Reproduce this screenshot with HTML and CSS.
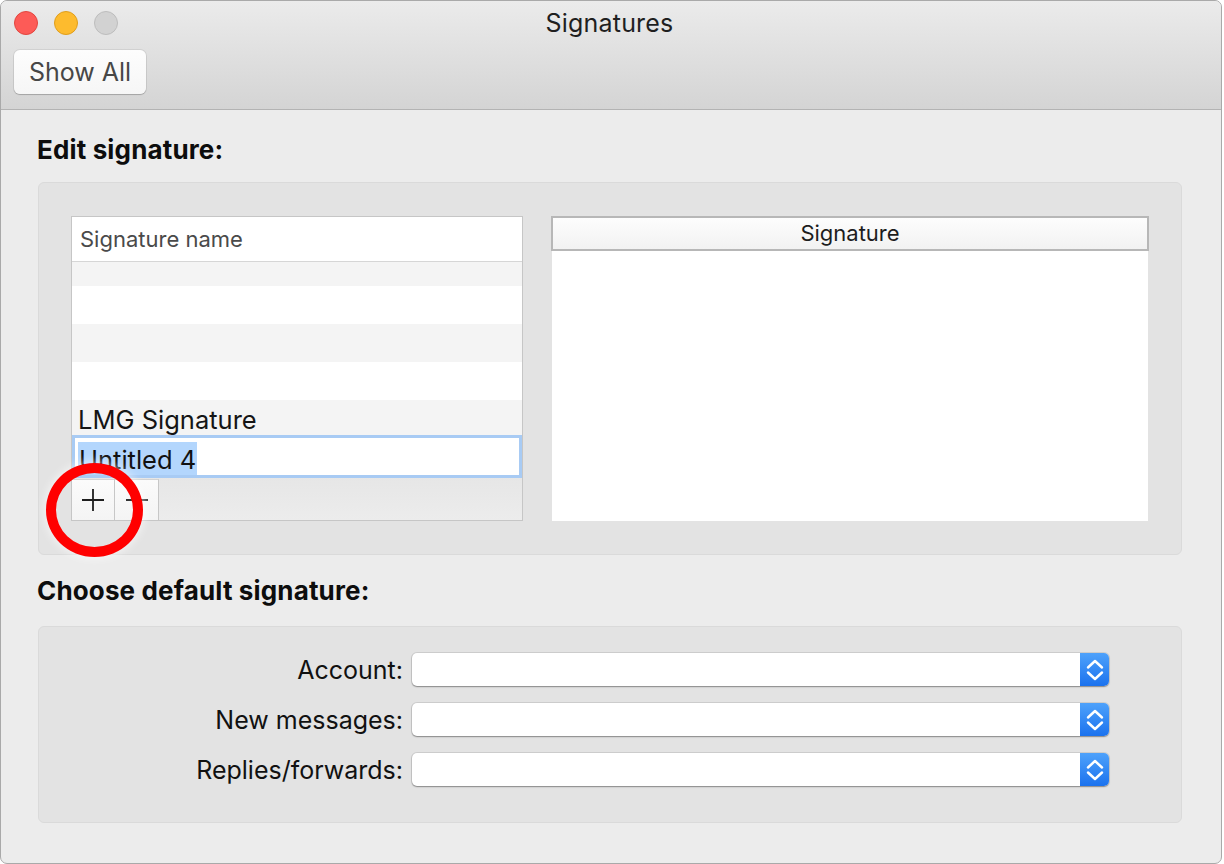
FILE: index.html
```html
<!DOCTYPE html>
<html>
<head>
<meta charset="utf-8">
<title>Signatures</title>
<link rel="stylesheet" href="styles.css">
</head>
<body>
<div class="window">
  <div class="chrome">
    <div class="titlebar">
      <div class="lights">
        <span class="light red"></span>
        <span class="light yellow"></span>
        <span class="light gray"></span>
      </div>
      <div class="title">Signatures</div>
      <div class="spacer"></div>
    </div>
    <div class="toolbar">
      <button class="show-all">Show All</button>
    </div>
  </div>
  <div class="content">
    <h2 class="section-title first">Edit signature:</h2>
    <div class="group edit-group">
      <div class="list">
        <div class="list-header">Signature name</div>
        <div class="list-body">
          <div class="row alt partial"></div>
          <div class="row"></div>
          <div class="row alt"></div>
          <div class="row"></div>
          <div class="row alt"><span class="row-text">LMG Signature</span></div>
          <div class="row editing"><div class="field"><span class="sel">Untitled 4</span></div></div>
        </div>
        <div class="list-footer">
          <div class="tool-btn plus">
            <svg width="24" height="24" viewBox="0 0 24 24"><path d="M12 1v22M1 12h22" stroke="#1e1e1e" stroke-width="1.8" fill="none"/></svg>
          </div>
          <div class="tool-btn minus">
            <svg width="24" height="24" viewBox="0 0 24 24"><path d="M1 12h22" stroke="#1e1e1e" stroke-width="1.8" fill="none"/></svg>
          </div>
          <div class="footer-fill"></div>
        </div>
        <div class="annot-circle"></div>
      </div>
      <div class="preview">
        <div class="preview-header">Signature</div>
        <div class="preview-body"></div>
      </div>
    </div>
    <h2 class="section-title second">Choose default signature:</h2>
    <div class="group default-group">
      <div class="form-row">
        <label class="form-label">Account:</label>
        <div class="popup">
          <div class="popup-field"></div>
          <div class="stepper"><svg width="18" height="24" viewBox="0 0 18 24"><path d="M2 9.5L9 3l7 6.5M2 14.5L9 21l7-6.5" stroke="#fff" stroke-width="2.4" fill="none" stroke-linecap="round" stroke-linejoin="round"/></svg></div>
        </div>
      </div>
      <div class="form-row">
        <label class="form-label">New messages:</label>
        <div class="popup">
          <div class="popup-field"></div>
          <div class="stepper"><svg width="18" height="24" viewBox="0 0 18 24"><path d="M2 9.5L9 3l7 6.5M2 14.5L9 21l7-6.5" stroke="#fff" stroke-width="2.4" fill="none" stroke-linecap="round" stroke-linejoin="round"/></svg></div>
        </div>
      </div>
      <div class="form-row">
        <label class="form-label">Replies/forwards:</label>
        <div class="popup">
          <div class="popup-field"></div>
          <div class="stepper"><svg width="18" height="24" viewBox="0 0 18 24"><path d="M2 9.5L9 3l7 6.5M2 14.5L9 21l7-6.5" stroke="#fff" stroke-width="2.4" fill="none" stroke-linecap="round" stroke-linejoin="round"/></svg></div>
        </div>
      </div>
    </div>
  </div>
</div>
</body>
</html>
```
FILE: styles.css
```css
* { box-sizing: border-box; }
html, body { margin: 0; padding: 0; background: #ffffff; }
body {
  font-family: Inter, "Noto Sans", "Liberation Sans", sans-serif;
  color: #1a1a1a;
  width: 1224px;
  height: 864px;
  overflow: hidden;
}
.window {
  width: 1222px;
  height: 864px;
  border: 1px solid #a9a9a9;
  border-radius: 7px;
  overflow: hidden;
  background: #ececec;
  display: flex;
  flex-direction: column;
}
.chrome {
  background: linear-gradient(#ebebeb, #d4d4d4);
  border-bottom: 1px solid #b3b3b3;
  height: 109px;
}
.titlebar {
  height: 43px;
  display: grid;
  grid-template-columns: 1fr auto 1fr;
  align-items: center;
}
.lights {
  display: flex;
  gap: 16px;
  padding-left: 13px;
  padding-top: 1px;
}
.light {
  width: 24px;
  height: 24px;
  border-radius: 50%;
  display: block;
}
.light.red { background: #fd5b57; border: 1px solid #e2463f; }
.light.yellow { background: #fdbb2e; border: 1px solid #e09e1c; }
.light.gray { background: #d2d2d2; border: 1px solid #bdbdbd; }
.title {
  font-size: 25px;
  color: #1f1f1f;
  letter-spacing: 0.2px;
  padding-right: 3px;
}
.toolbar {
  padding: 6px 13px 0;
}
.show-all {
  width: 132px;
  height: 44px;
  border: none;
  border-radius: 6px;
  background: linear-gradient(#fdfdfd, #f6f6f6);
  box-shadow: 0 0 0 1px rgba(0,0,0,0.07), 0 1px 1px rgba(0,0,0,0.18);
  font-family: Inter, "Noto Sans", sans-serif;
  font-size: 25px;
  color: #474747;
  padding: 0;
}
.content {
  flex: 1;
  padding: 0 39px 0 36px;
}
.section-title {
  margin: 0;
  font-size: 26px;
  font-weight: 700;
  line-height: 30px;
  letter-spacing: 0.15px;
  color: #0d0d0d;
}
.section-title.first { margin-top: 25px; margin-bottom: 17px; }
.section-title.second { margin-top: 21px; margin-bottom: 20px; }
.group {
  background: #e3e3e3;
  border: 1px solid #dadada;
  border-radius: 6px;
  margin-left: 1px;
}
.edit-group {
  display: grid;
  grid-template-columns: 452px 598px;
  column-gap: 28px;
  padding: 33px 31px 33px 32px;
}
.list {
  position: relative;
  height: 305px;
  border: 1px solid #c6c6c6;
  background: #ffffff;
  display: flex;
  flex-direction: column;
}
.list-header {
  height: 45px;
  border-bottom: 1px solid #d6d6d6;
  font-size: 22px;
  color: #4a4a4a;
  padding-left: 8px;
  line-height: 44px;
}
.list-body {
  height: 214px;
  display: flex;
  flex-direction: column;
}
.row {
  height: 38px;
  flex: none;
  background: #ffffff;
  font-size: 25.5px;
  color: #151515;
  padding-left: 6px;
  line-height: 40px;
}
.row.alt { background: #f4f4f4; }
.row.partial { height: 24px; }
.row.editing {
  padding: 0 3px;
  position: relative;
  z-index: 1;
}
.field {
  height: 37px;
  background: #ffffff;
  box-shadow: 0 0 0 3px #a8cbf4;
  padding-left: 3px;
  padding-top: 2px;
}
.sel {
  display: inline-block;
  background: #b3d6fd;
  height: 33px;
  line-height: 35px;
  padding: 0 1px;
  color: #111111;
  font-size: 25.5px;
}
.list-footer {
  flex: 1;
  background: linear-gradient(#e6e6e6, #ececec);
  display: flex;
  align-items: flex-end;
  padding-top: 3px;
}
.tool-btn {
  width: 44px;
  height: 41px;
  background: linear-gradient(#fbfbfb, #f4f4f4);
  border-right: 1px solid #c7c7c7;
  border-top: 1px solid #d3d3d3;
  display: flex;
  align-items: center;
  justify-content: center;
}
.tool-btn.plus { width: 43px; }
.footer-fill { flex: 1; }
.annot-circle {
  position: absolute;
  left: -26px;
  top: 246px;
  width: 97px;
  height: 94px;
  border: 10px solid #ff0000;
  border-radius: 50%;
  box-shadow: 0 0 8px 2px rgba(255,255,255,0.55);
  z-index: 3;
}
.preview {
  display: flex;
  flex-direction: column;
  height: 305px;
}
.preview-header {
  height: 35px;
  border: 2px solid #b7b7b7;
  background: linear-gradient(#fdfdfd, #f2f2f2);
  text-align: center;
  font-size: 22px;
  color: #1d1d1d;
  line-height: 31px;
}
.preview-body {
  flex: 1;
  background: #ffffff;
  margin: 0 1px;
}
.default-group {
  padding: 26px 0 36px 0;
  display: flex;
  flex-direction: column;
  gap: 17px;
}
.form-row {
  display: grid;
  grid-template-columns: 364px 697px;
  column-gap: 9px;
  align-items: center;
}
.form-label {
  text-align: right;
  font-size: 25px;
  color: #111111;
}
.popup {
  height: 33px;
  display: flex;
  border-radius: 5px;
  background: #ffffff;
  box-shadow: 0 0 0 1px rgba(0,0,0,0.09), 0 1px 1.5px rgba(0,0,0,0.35);
}
.popup-field { flex: 1; }
.stepper {
  width: 29px;
  border-radius: 0 5px 5px 0;
  background: linear-gradient(#4ea2fb, #1b72ee);
  display: flex;
  align-items: center;
  justify-content: center;
}
```
